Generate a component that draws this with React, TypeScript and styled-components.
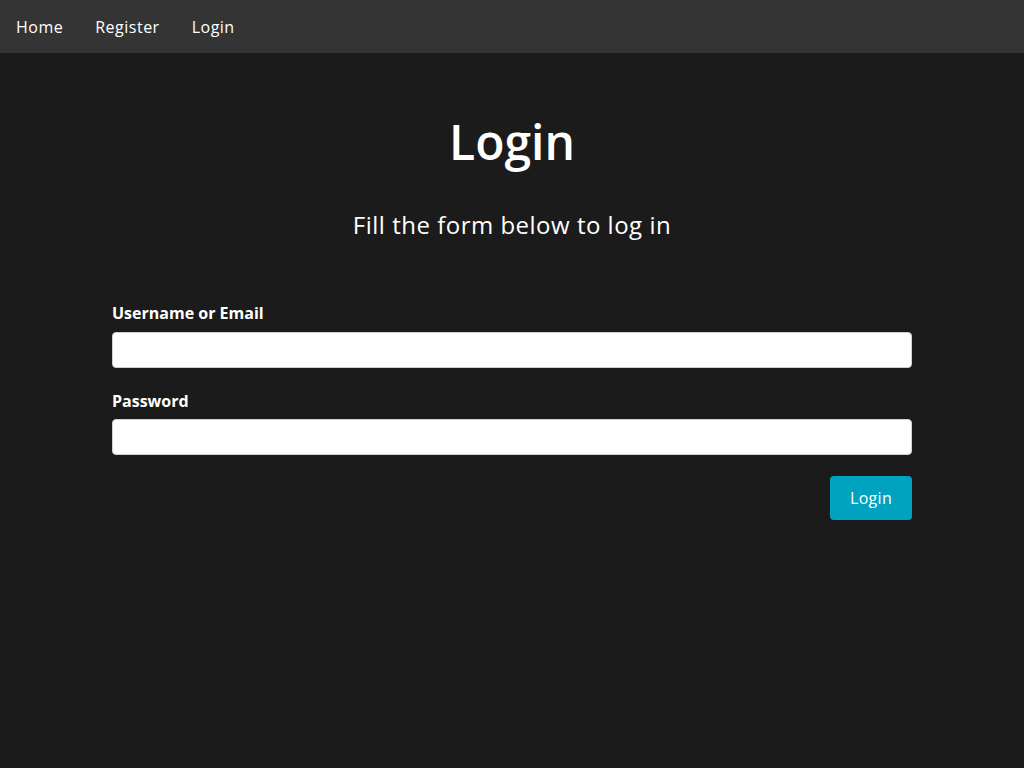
import styled, { createGlobalStyle } from 'styled-components';

const GlobalStyle = createGlobalStyle`
  body {
    margin: 0;
    background: #1b1b1b;
    color: #ffffff;
    font-family: "Open Sans", "Noto Sans", sans-serif;
  }
`;

export default function App() {
  return (
    <>
      <GlobalStyle />
      <NavBar>
        <NavLink href="#">Home</NavLink>
        <NavLink href="#">Register</NavLink>
        <NavLink href="#">Login</NavLink>
      </NavBar>

      <Main>
        <Title>Login</Title>
        <Subtitle>Fill the form below to log in</Subtitle>

        <Form onSubmit={e => e.preventDefault()}>
          <Field>
            <Label htmlFor="user">Username or Email</Label>
            <Input id="user" type="text" />
          </Field>
          <Field>
            <Label htmlFor="pass">Password</Label>
            <Input id="pass" type="password" />
          </Field>
          <Actions>
            <SubmitButton type="submit">Login</SubmitButton>
          </Actions>
        </Form>
      </Main>
    </>
  );
}

const NavBar = styled.nav`
  display: flex;
  align-items: center;
  height: 53px;
  background: #343434;
`;
const NavLink = styled.a`
  padding: 0 16px;
  color: #ffffff;
  font-size: 16px;
  letter-spacing: 0.5px;
  text-decoration: none;
  line-height: 52px;
`;
const Main = styled.main`
  display: flex;
  flex-direction: column;
  align-items: center;
  padding-top: 60px;
`;
const Title = styled.h1`
  margin: 0;
  font-size: 48px;
  font-weight: 600;
  line-height: 1.2;
`;
const Subtitle = styled.p`
  margin: 40px 0 0;
  font-size: 24px;
  font-weight: 400;
  line-height: 1.2;
  letter-spacing: 0.5px;
`;
const Form = styled.form`
  display: flex;
  flex-direction: column;
  gap: 24px;
  width: 800px;
  margin-top: 65px;
`;
const Field = styled.div`
  display: flex;
  flex-direction: column;
  gap: 8px;
`;
const Label = styled.label`
  font-size: 16px;
  font-weight: 700;
  line-height: 1.2;
`;
const Input = styled.input`
  box-sizing: border-box;
  height: 36px;
  width: 100%;
  border: 1px solid #cfcfcf;
  border-radius: 4px;
  background: #ffffff;
  padding: 0 10px;
  font-size: 16px;
  outline: none;
`;
const Actions = styled.div`
  display: flex;
  justify-content: flex-end;
  margin-top: -3px;
`;
const SubmitButton = styled.button`
  height: 44px;
  width: 82px;
  border: none;
  border-radius: 4px;
  background: #00a3bf;
  color: #ffffff;
  font-family: inherit;
  font-size: 16px;
  letter-spacing: 0.3px;
  cursor: pointer;
`;
